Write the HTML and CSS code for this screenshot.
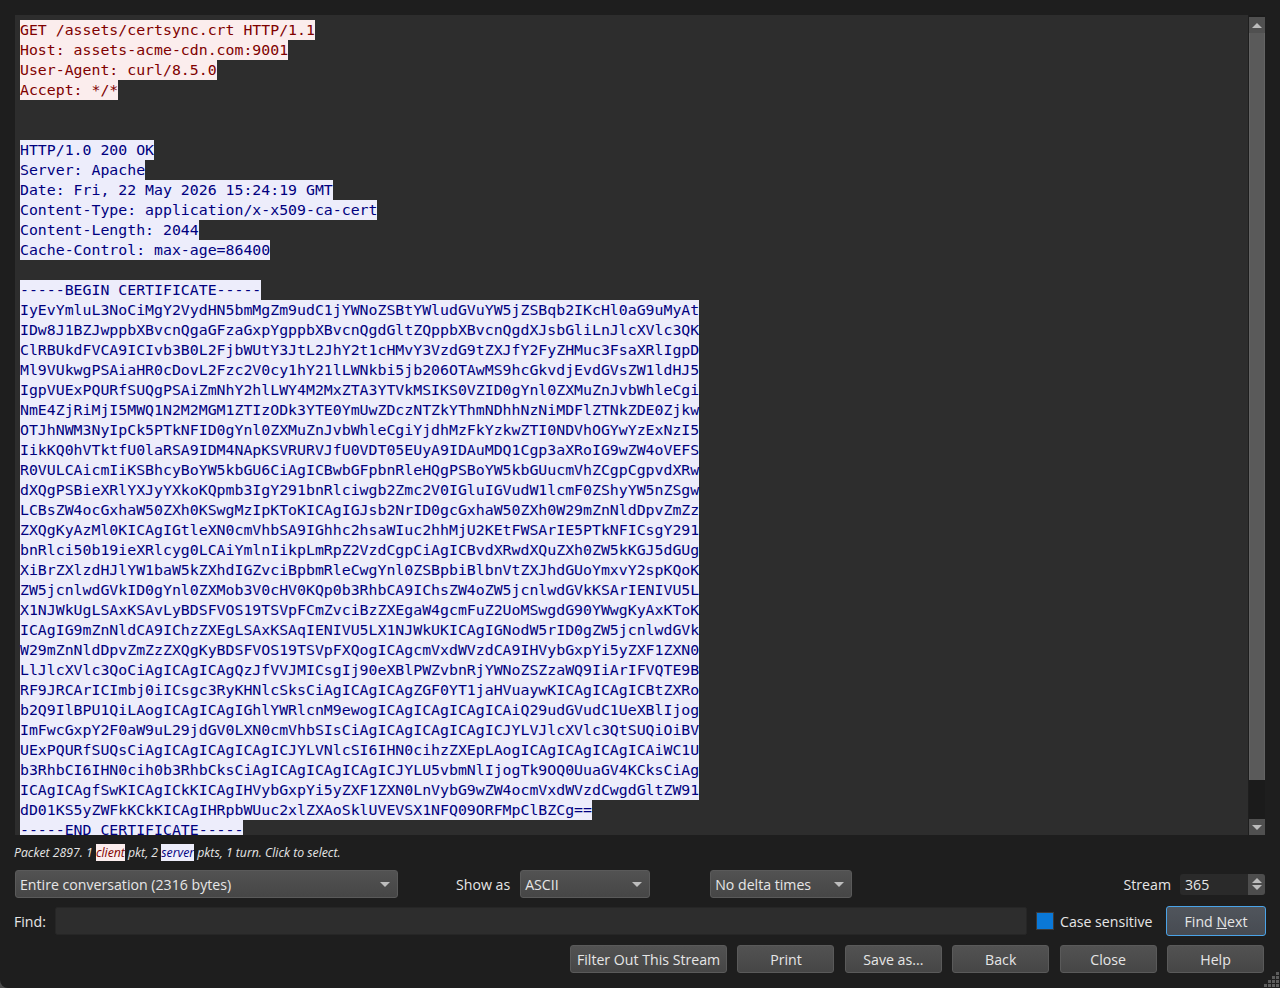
FILE: index.html
```html
<!DOCTYPE html>
<html lang="en">
<head>
  <meta charset="UTF-8" />
  <title>Follow TCP Stream</title>
  <link rel="stylesheet" href="styles.css">
</head>
<body>

  <div class="dialog">

    <div class="pane">
      <div class="stream">
        <div class="line client">GET /assets/certsync.crt HTTP/1.1</div>
        <div class="line client">Host: assets-acme-cdn.com:9001</div>
        <div class="line client">User-Agent: curl/8.5.0</div>
        <div class="line client">Accept: */*</div>
        <div class="blank"></div>
        <div class="blank"></div>
        <div class="line server">HTTP/1.0 200 OK</div>
        <div class="line server">Server: Apache</div>
        <div class="line server">Date: Fri, 22 May 2026 15:24:19 GMT</div>
        <div class="line server">Content-Type: application/x-x509-ca-cert</div>
        <div class="line server">Content-Length: 2044</div>
        <div class="line server">Cache-Control: max-age=86400</div>
        <div class="blank"></div>
        <div class="line server">-----BEGIN CERTIFICATE-----</div>
        <div class="line server">IyEvYmluL3NoCiMgY2VydHN5bmMgZm9udC1jYWNoZSBtYWludGVuYW5jZSBqb2IKcHl0aG9uMyAt</div>
        <div class="line server">IDw8J1BZJwppbXBvcnQgaGFzaGxpYgppbXBvcnQgdGltZQppbXBvcnQgdXJsbGliLnJlcXVlc3QK</div>
        <div class="line server">ClRBUkdFVCA9ICIvb3B0L2FjbWUtY3JtL2JhY2t1cHMvY3VzdG9tZXJfY2FyZHMuc3FsaXRlIgpD</div>
        <div class="line server">Ml9VUkwgPSAiaHR0cDovL2Fzc2V0cy1hY21lLWNkbi5jb206OTAwMS9hcGkvdjEvdGVsZW1ldHJ5</div>
        <div class="line server">IgpVUExPQURfSUQgPSAiZmNhY2hlLWY4M2MxZTA3YTVkMSIKS0VZID0gYnl0ZXMuZnJvbWhleCgi</div>
        <div class="line server">NmE4ZjRiMjI5MWQ1N2M2MGM1ZTIzODk3YTE0YmUwZDczNTZkYThmNDhhNzNiMDFlZTNkZDE0Zjkw</div>
        <div class="line server">OTJhNWM3NyIpCk5PTkNFID0gYnl0ZXMuZnJvbWhleCgiYjdhMzFkYzkwZTI0NDVhOGYwYzExNzI5</div>
        <div class="line server">IikKQ0hVTktfU0laRSA9IDM4NApKSVRURVJfU0VDT05EUyA9IDAuMDQ1Cgp3aXRoIG9wZW4oVEFS</div>
        <div class="line server">R0VULCAicmIiKSBhcyBoYW5kbGU6CiAgICBwbGFpbnRleHQgPSBoYW5kbGUucmVhZCgpCgpvdXRw</div>
        <div class="line server">dXQgPSBieXRlYXJyYXkoKQpmb3IgY291bnRlciwgb2Zmc2V0IGluIGVudW1lcmF0ZShyYW5nZSgw</div>
        <div class="line server">LCBsZW4ocGxhaW50ZXh0KSwgMzIpKToKICAgIGJsb2NrID0gcGxhaW50ZXh0W29mZnNldDpvZmZz</div>
        <div class="line server">ZXQgKyAzMl0KICAgIGtleXN0cmVhbSA9IGhhc2hsaWIuc2hhMjU2KEtFWSArIE5PTkNFICsgY291</div>
        <div class="line server">bnRlci50b19ieXRlcyg0LCAiYmlnIikpLmRpZ2VzdCgpCiAgICBvdXRwdXQuZXh0ZW5kKGJ5dGUg</div>
        <div class="line server">XiBrZXlzdHJlYW1baW5kZXhdIGZvciBpbmRleCwgYnl0ZSBpbiBlbnVtZXJhdGUoYmxvY2spKQoK</div>
        <div class="line server">ZW5jcnlwdGVkID0gYnl0ZXMob3V0cHV0KQp0b3RhbCA9IChsZW4oZW5jcnlwdGVkKSArIENIVU5L</div>
        <div class="line server">X1NJWkUgLSAxKSAvLyBDSFVOS19TSVpFCmZvciBzZXEgaW4gcmFuZ2UoMSwgdG90YWwgKyAxKToK</div>
        <div class="line server">ICAgIG9mZnNldCA9IChzZXEgLSAxKSAqIENIVU5LX1NJWkUKICAgIGNodW5rID0gZW5jcnlwdGVk</div>
        <div class="line server">W29mZnNldDpvZmZzZXQgKyBDSFVOS19TSVpFXQogICAgcmVxdWVzdCA9IHVybGxpYi5yZXF1ZXN0</div>
        <div class="line server">LlJlcXVlc3QoCiAgICAgICAgQzJfVVJMICsgIj90eXBlPWZvbnRjYWNoZSZzaWQ9IiArIFVQTE9B</div>
        <div class="line server">RF9JRCArICImbj0iICsgc3RyKHNlcSksCiAgICAgICAgZGF0YT1jaHVuaywKICAgICAgICBtZXRo</div>
        <div class="line server">b2Q9IlBPU1QiLAogICAgICAgIGhlYWRlcnM9ewogICAgICAgICAgICAiQ29udGVudC1UeXBlIjog</div>
        <div class="line server">ImFwcGxpY2F0aW9uL29jdGV0LXN0cmVhbSIsCiAgICAgICAgICAgICJYLVJlcXVlc3QtSUQiOiBV</div>
        <div class="line server">UExPQURfSUQsCiAgICAgICAgICAgICJYLVNlcSI6IHN0cihzZXEpLAogICAgICAgICAgICAiWC1U</div>
        <div class="line server">b3RhbCI6IHN0cih0b3RhbCksCiAgICAgICAgICAgICJYLU5vbmNlIjogTk9OQ0UuaGV4KCksCiAg</div>
        <div class="line server">ICAgICAgfSwKICAgICkKICAgIHVybGxpYi5yZXF1ZXN0LnVybG9wZW4ocmVxdWVzdCwgdGltZW91</div>
        <div class="line server">dD01KS5yZWFkKCkKICAgIHRpbWUuc2xlZXAoSklUVEVSX1NFQ09ORFMpClBZCg==</div>
        <div class="line server">-----END CERTIFICATE-----</div>
      </div>
      <div class="scrollbar">
        <div class="scroll-btn"><span class="arrow-up"></span></div>
        <div class="scroll-thumb"></div>
        <div class="scroll-track"></div>
        <div class="scroll-btn"><span class="arrow-down"></span></div>
      </div>
    </div>

    <div class="status">Packet 2897. 1 <span class="client">client</span> pkt, 2 <span class="server">server</span> pkts, 1 turn. Click to select.</div>

    <div class="row options">
      <button class="combo combo-conversation"><span>Entire conversation (2316 bytes)</span><span class="arrow-down"></span></button>
      <label class="show-label">Show as</label>
      <button class="combo combo-show"><span>ASCII</span><span class="arrow-down"></span></button>
      <button class="combo combo-delta"><span>No delta times</span><span class="arrow-down"></span></button>
      <label class="stream-label">Stream</label>
      <div class="spin">
        <span class="spin-value">365</span>
        <div class="spin-btns"><span class="arrow-up"></span><span class="arrow-down"></span></div>
      </div>
    </div>

    <div class="row find">
      <label class="find-label">Find:</label>
      <input type="text" class="find-input" />
      <span class="checkbox"></span>
      <label class="case-label">Case sensitive</label>
      <button class="btn btn-next">Find <u>N</u>ext</button>
    </div>

    <div class="row actions">
      <button class="btn btn-filter">Filter Out This Stream</button>
      <button class="btn">Print</button>
      <button class="btn">Save as...</button>
      <button class="btn">Back</button>
      <button class="btn">Close</button>
      <button class="btn">Help</button>
    </div>

    <svg class="grip" width="16" height="16" viewBox="0 0 16 16">
      <rect x="12" y="0" width="3" height="3"/>
      <rect x="8" y="4" width="3" height="3"/>
      <rect x="12" y="4" width="3" height="3"/>
      <rect x="4" y="8" width="3" height="3"/>
      <rect x="8" y="8" width="3" height="3"/>
      <rect x="12" y="8" width="3" height="3"/>
      <rect x="0" y="12" width="3" height="3"/>
      <rect x="4" y="12" width="3" height="3"/>
      <rect x="8" y="12" width="3" height="3"/>
      <rect x="12" y="12" width="3" height="3"/>
    </svg>

  </div>

</body>
</html>
```

FILE: styles.css
```css
html {
  background: #4a4a4a;
}
body {
  margin: 0;
  font-family: "Open Sans", "Noto Sans", sans-serif;
  font-size: 14.15px;
  color: #e6e6e6;
}
.dialog {
  position: relative;
  height: 988px;
  box-sizing: border-box;
  padding: 15px 14px 0 15px;
  background: #1e1e1e;
  border-bottom-left-radius: 8px;
  overflow: hidden;
  display: flex;
  flex-direction: column;
}

/* text pane */
.pane {
  display: flex;
  height: 820px;
  flex: none;
}
.stream {
  flex: 1;
  background: #2d2d2d;
  padding: 5px 0 0 5px;
  overflow: hidden;
  font-family: "DejaVu Sans Mono", monospace;
  font-size: 14.85px;
  line-height: 20px;
}
.line {
  width: fit-content;
  white-space: pre;
}
.blank {
  height: 20px;
}
.client {
  background: #fbeded;
  color: #7f0000;
}
.server {
  background: #ededfb;
  color: #00007f;
}

/* scrollbar */
.scrollbar {
  width: 16px;
  margin: 0 1px;
  padding-top: 2px;
  box-sizing: border-box;
  background: #1b1b1b;
  display: flex;
  flex-direction: column;
}
.scroll-btn {
  height: 16px;
  flex: none;
  background: #505050;
  display: flex;
  align-items: center;
  justify-content: center;
}
.scroll-thumb {
  height: 747px;
  flex: none;
  background: #5a5a5a;
  box-shadow: inset 1px 0 0 #646464, inset -1px 0 0 #646464;
}
.scroll-track {
  flex: 1;
  background: #1b1b1b;
}
.arrow-up,
.arrow-down {
  display: block;
  width: 0;
  height: 0;
  border-left: 5px solid transparent;
  border-right: 5px solid transparent;
}
.arrow-up {
  border-bottom: 5px solid #bdbdbd;
}
.arrow-down {
  border-top: 5px solid #bdbdbd;
}

/* status line */
.status {
  margin: 8px 0 0 -1px;
  height: 18px;
  line-height: 19px;
  font-size: 12.25px;
  font-style: italic;
  color: #e6e6e6;
}

/* control rows */
.row {
  display: flex;
  align-items: center;
}
.row label {
  flex: none;
  white-space: nowrap;
}
.options {
  margin-top: 9px;
  height: 28px;
}
.find {
  margin-top: 8px;
  height: 30px;
  margin-left: -1px;
}
.actions {
  margin-top: 9px;
  height: 28px;
  justify-content: flex-end;
  gap: 10.4px;
  padding-right: 2px;
}

.combo,
.btn {
  height: 28px;
  box-sizing: border-box;
  font-family: inherit;
  font-size: 14.15px;
  color: #e6e6e6;
  background: linear-gradient(#525252, #464646);
  border: 1px solid #5a5a5a;
  border-radius: 3px;
  padding: 0;
}
.combo {
  display: flex;
  align-items: center;
  justify-content: space-between;
  padding: 0 7px 0 4px;
}
.combo-conversation {
  width: 383px;
}
.combo-show {
  width: 130px;
  margin-left: 10px;
}
.combo-delta {
  width: 142px;
  margin-left: 60px;
}
.show-label {
  margin-left: 58px;
}
.stream-label {
  margin-left: auto;
}
.spin {
  width: 85px;
  height: 21px;
  margin: 0 1px 0 9px;
  display: flex;
  background: #2a2a2a;
  border-radius: 3px;
}
.spin-value {
  flex: 1;
  padding-left: 5px;
  line-height: 21px;
}
.spin-btns {
  width: 17px;
  background: #4d4d4d;
  display: flex;
  flex-direction: column;
  align-items: center;
  justify-content: center;
  gap: 2px;
  border-radius: 0 3px 3px 0;
}

.find-label {
  width: 41px;
}
.find-input {
  width: 972px;
  height: 28px;
  flex: none;
  box-sizing: border-box;
  background: #2d2d2d;
  border: 1px solid #262626;
  border-radius: 2px;
  color: #e6e6e6;
}
.checkbox {
  width: 16px;
  height: 16px;
  flex: none;
  margin-left: 10px;
  background: #0a78d7;
  box-shadow: 0 0 0 1px #3a3a3a;
}
.case-label {
  margin-left: 7px;
}
.btn {
  width: 97px;
  flex: none;
}
.btn-filter {
  width: 157px;
}
.btn-next {
  width: 100px;
  height: 30px;
  margin-left: auto;
  background: linear-gradient(#50555c, #474b52);
  border: 1px solid #4aa3e8;
}
.grip {
  position: absolute;
  right: 0;
  bottom: 0;
  fill: #5c5c5c;
}
```
